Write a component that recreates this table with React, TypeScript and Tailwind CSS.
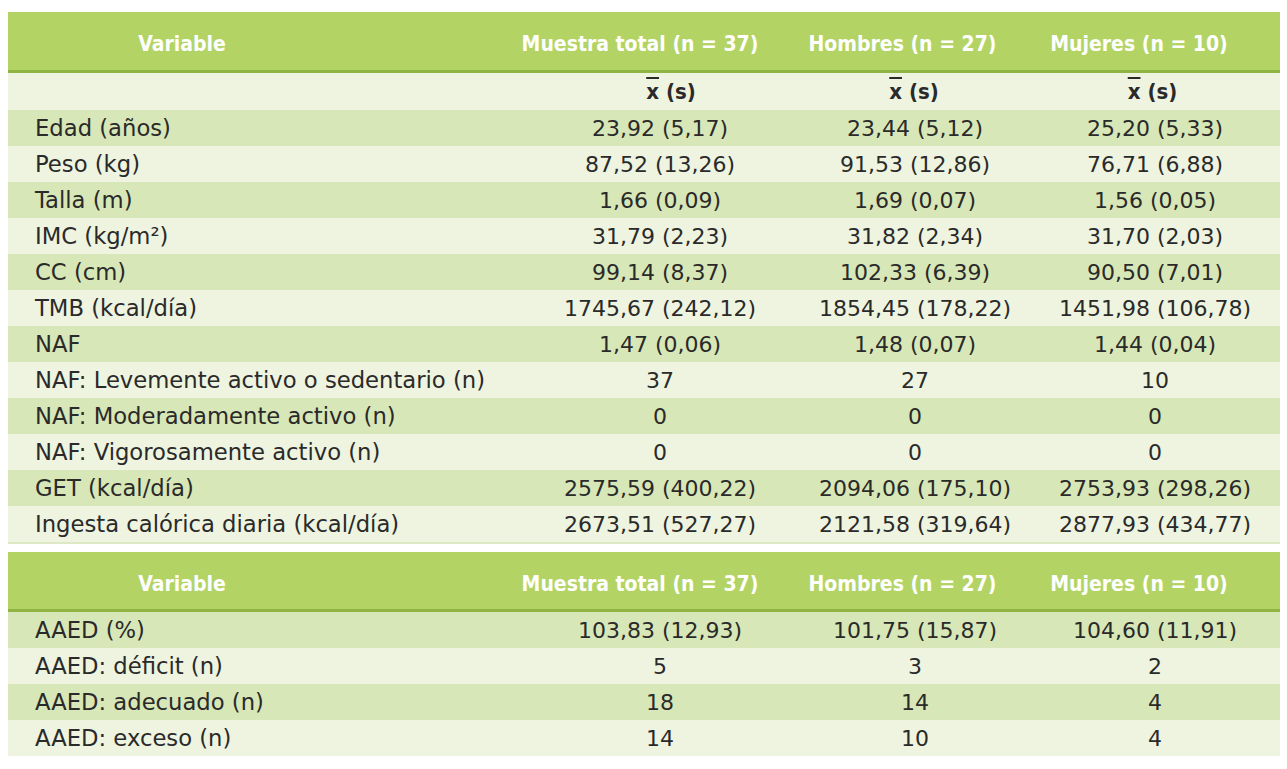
import React from "react";

const body = { fontFamily: '"DejaVu Sans", "Noto Sans", sans-serif' };
const cond = { fontFamily: '"DejaVu Sans Condensed", "Liberation Sans Narrow", "Roboto", "DejaVu Sans", sans-serif' };

const rows1: [string, string, string, string][] = [
  ["Edad (años)", "23,92 (5,17)", "23,44 (5,12)", "25,20 (5,33)"],
  ["Peso (kg)", "87,52 (13,26)", "91,53 (12,86)", "76,71 (6,88)"],
  ["Talla (m)", "1,66 (0,09)", "1,69 (0,07)", "1,56 (0,05)"],
  ["IMC (kg/m²)", "31,79 (2,23)", "31,82 (2,34)", "31,70 (2,03)"],
  ["CC (cm)", "99,14 (8,37)", "102,33 (6,39)", "90,50 (7,01)"],
  ["TMB (kcal/día)", "1745,67 (242,12)", "1854,45 (178,22)", "1451,98 (106,78)"],
  ["NAF", "1,47 (0,06)", "1,48 (0,07)", "1,44 (0,04)"],
  ["NAF: Levemente activo o sedentario (n)", "37", "27", "10"],
  ["NAF: Moderadamente activo (n)", "0", "0", "0"],
  ["NAF: Vigorosamente activo (n)", "0", "0", "0"],
  ["GET (kcal/día)", "2575,59 (400,22)", "2094,06 (175,10)", "2753,93 (298,26)"],
  ["Ingesta calórica diaria (kcal/día)", "2673,51 (527,27)", "2121,58 (319,64)", "2877,93 (434,77)"],
];

const rows2: [string, string, string, string][] = [
  ["AAED (%)", "103,83 (12,93)", "101,75 (15,87)", "104,60 (11,91)"],
  ["AAED: déficit (n)", "5", "3", "2"],
  ["AAED: adecuado (n)", "18", "14", "4"],
  ["AAED: exceso (n)", "14", "10", "4"],
];

const grid = "grid grid-cols-[510px_262px_245px_1fr]";

function Header({ h }: { h: number }) {
  return (
    <div
      className={`${grid} items-center bg-[#b3d465] border-b-[3px] border-[#8fb444] text-white font-bold text-[21px] whitespace-nowrap pt-[8px]`}
      style={{ ...cond, height: h }}
    >
      <div className="text-center pr-[162px]">Variable</div>
      <div className="text-center pr-[18px]">Muestra total (n = 37)</div>
      <div className="text-center">Hombres (n = 27)</div>
      <div className="text-center pr-[27px]">Mujeres (n = 10)</div>
    </div>
  );
}

function Row({ r, dark }: { r: [string, string, string, string]; dark: boolean }) {
  return (
    <div
      className={`${grid} items-center h-[36px] text-[22px] text-[#2a2a2a] whitespace-nowrap ${dark ? "bg-[#d8e7b7]" : "bg-[#eef4e0]"}`}
      style={body}
    >
      <div className="pl-[27px] text-[22.7px]">{r[0]}</div>
      <div className="text-center pl-[22px]">{r[1]}</div>
      <div className="text-center pl-[25px]">{r[2]}</div>
      <div className="text-center pl-[5px]">{r[3]}</div>
    </div>
  );
}

function XS() {
  return (
    <span>
      <span className="overline">x</span> (s)
    </span>
  );
}

export default function App() {
  return (
    <div className="w-[1287px] h-[769px] bg-white pt-[12px] px-[8px] pr-[7px]">
      <div>
        <Header h={61} />
        <div
          className={`${grid} items-center h-[37px] bg-[#eef4e0] text-[22px] text-[#2a2a2a] font-semibold`}
          style={cond}
        >
          <div />
          <div className="text-center pl-[44px]"><XS /></div>
          <div className="text-center pl-[23px]"><XS /></div>
          <div className="text-center"><XS /></div>
        </div>
        {rows1.map((r, i) => (
          <Row key={i} r={r} dark={i % 2 === 0} />
        ))}
        <div className="h-[2px] bg-[#dde9c4]" />
      </div>
      <div className="mt-[8px]">
        <Header h={60} />
        {rows2.map((r, i) => (
          <Row key={i} r={r} dark={i % 2 === 0} />
        ))}
      </div>
    </div>
  );
}
